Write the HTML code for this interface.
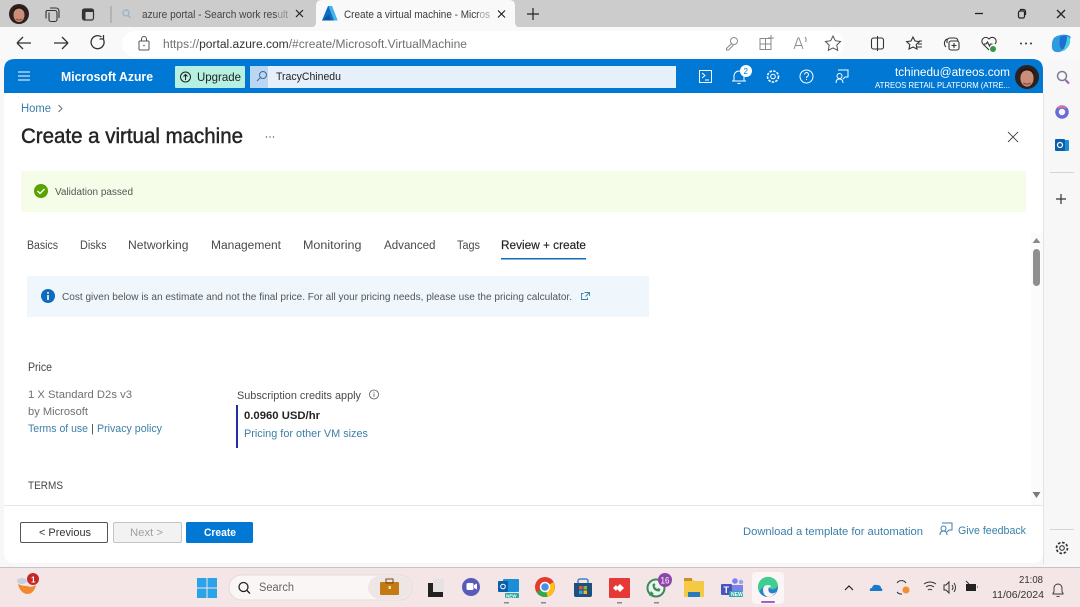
<!DOCTYPE html>
<html><head><meta charset="utf-8"><title>Create a virtual machine</title>
<style>
html,body{margin:0;padding:0;width:1080px;height:607px;overflow:hidden;background:#f7f7f7}
svg{display:block;fill:#323130}
text{font-family:"Liberation Sans",sans-serif}
text.l{fill:#3a7fa8}
</style></head><body>
<svg width="1080" height="607" viewBox="0 0 1080 607" xmlns="http://www.w3.org/2000/svg">
<defs>
<g id="av"><circle r="10" fill="#2c211e"/><ellipse cx="0" cy="1" rx="5.500" ry="7" fill="#c98d78"/><path d="M-6-2Q0-9 6-2L5-5Q0-9-5-5Z" fill="#1d1513"/><path d="M-3 5Q0 7 3 5" stroke="#8a3f3f" fill="none"/></g>
</defs>
<rect width="1080" height="607" fill="#f7f7f7"/>
<!-- tab strip -->
<rect width="1080" height="27" fill="#cccccc"/>
<use href="#av" x="19" y="14"/>
<path d="M47 10.500h8a2 2 0 0 1 2 2v7a2 2 0 0 1-2 2h-4a2 2 0 0 1-2-2v-7M47 10.500a2 2 0 0 0-1 2v6M50 8h6a3 3 0 0 1 3 3v7" style="fill:none;stroke:#333;stroke-width:1.100"/>
<rect x="82.500" y="9" width="11" height="11" rx="2" style="fill:none;stroke:#333;stroke-width:1.200"/><rect x="82.500" y="9" width="11" height="3" fill="#333"/><rect x="82.500" y="9" width="3" height="11" fill="#333"/>
<rect x="110.500" y="6" width="1" height="17" fill="#9a9a9a"/>
<circle cx="126" cy="13" r="3" style="fill:none;stroke:#8fb3cf;stroke-width:1.200"/><path d="M128 15.500l2.500 2.500" stroke="#8fb3cf" stroke-width="1.200"/>
<text x="142" y="18" font-size="11" textLength="146" lengthAdjust="spacingAndGlyphs" fill="#444">azure portal - Search work result</text>
<rect x="278" y="5" width="12" height="16" fill="#cccccc" opacity=".55"/>
<path d="M296 10l7 7M303 10l-7 7" stroke="#222" stroke-width="1.200"/>
<path d="M312 27q4 0 4-5V6q0-6 6-6h187q6 0 6 6v16q0 5 4 5Z" fill="#f9f9f9"/>
<path d="M322 20.500L328 6h4l5.500 14.500z" fill="#0a6fc2"/><path d="M328.500 6h3.500l5.500 14.500h-3.500z" fill="#45b4ea"/><path d="M322 20.500l6.500-6 3 6z" fill="#0b56a0"/>
<text x="344" y="18" font-size="11" textLength="146" lengthAdjust="spacingAndGlyphs" fill="#3a3a3a">Create a virtual machine - Micros</text>
<rect x="480" y="5" width="10" height="16" fill="#f9f9f9" opacity=".55"/>
<path d="M498 10.500l7 7M505 10.500l-7 7" stroke="#222" stroke-width="1.200"/>
<path d="M533 8v12M527 14h12" stroke="#222" stroke-width="1.200"/>
<path d="M975 13.500h8" stroke="#222" stroke-width="1.300"/>
<rect x="1018.500" y="11" width="6" height="7" rx="1.500" style="fill:none;stroke:#222;stroke-width:1.200"/><path d="M1020.500 11V9.500h3a2 2 0 0 1 2 2V15" style="fill:none;stroke:#222;stroke-width:1.200"/>
<path d="M1057 10l8 8M1065 10l-8 8" stroke="#222" stroke-width="1.300"/>
<!-- toolbar -->
<rect y="27" width="1080" height="32" fill="#f9f9f9"/>
<rect x="122" y="31" width="722" height="26" rx="13" fill="#ffffff"/>
<path d="M31 43H17M17 43l6-6M17 43l6 6" style="fill:none;stroke:#333;stroke-width:1.300"/>
<path d="M54 43h14M68 43l-6-6M68 43l-6 6" style="fill:none;stroke:#333;stroke-width:1.300"/>
<path d="M103.500 39.500a6.500 6.500 0 1 1-2-2.500M103.500 35v4h-4" style="fill:none;stroke:#333;stroke-width:1.300"/>
<rect x="139" y="41" width="10" height="9" rx="1" style="fill:none;stroke:#555;stroke-width:1"/><path d="M141.500 41v-2a2.500 2.500 0 0 1 5 0v2" style="fill:none;stroke:#555;stroke-width:1"/><circle cx="144" cy="45.500" r=".8" fill="#555"/>
<text x="163" y="48" font-size="11.500" textLength="304" lengthAdjust="spacingAndGlyphs" fill="#707070">https://<tspan fill="#333">portal.azure.com</tspan>/#create/Microsoft.VirtualMachine</text>
<g style="fill:none;stroke:#8a8a8a;stroke-width:1">
<circle cx="734" cy="41" r="3.500"/><path d="M731.500 43.500l-5 5v1.500h2l5-5"/>
<rect x="760" y="38.500" width="11" height="11"/><path d="M765.500 38.500v11M760 44h11M771 35v6M768 38h6"/>
<path d="M794 49l4-11h1l4 11M795.500 45.500h6.500M805 37q2 2 .5 5"/>
<path d="M833 36l2.300 4.700 5.200.8-3.700 3.600.9 5.200-4.700-2.400-4.700 2.400.9-5.200-3.700-3.600 5.200-.8z" stroke="#555"/>
</g>
<g style="fill:none;stroke:#333;stroke-width:1.100">
<rect x="871.500" y="38" width="12" height="11" rx="2"/><path d="M877.500 36v15"/>
<path d="M913 37l2 4 4.400.6-3.200 3 .8 4.400-4-2-4 2 .8-4.400-3.200-3 4.400-.6zM919 41h3M918 44h4M917 47h5"/>
<path d="M947 43v-2a3 3 0 0 1 3-3h5a3 3 0 0 1 3 3M946 47a5 5 0 0 1 1-8"/><rect x="949" y="41" width="10" height="9" rx="2"/><path d="M954 43v5M951.500 45.500h5"/>
<path d="M989 50l-6-6a3.800 3.800 0 0 1 5.500-5.500l.5.500.5-.5a3.800 3.800 0 0 1 5.500 5.500M984 44h2l1.500-2 2 4 1-2h2"/>
</g>
<circle cx="993" cy="49" r="3" fill="#2f9a45"/>
<circle cx="1021" cy="43.500" r="1" fill="#333"/><circle cx="1026" cy="43.500" r="1" fill="#333"/><circle cx="1031" cy="43.500" r="1" fill="#333"/>
<path d="M1052 44q0-6 5-8t10-1q5 1 3 4l-6 10q-3 4-8 3t-4-8z" fill="#2e9be0"/><path d="M1060 37q6-3 10 0-1 6-5 11-3 3-5-1-1-5 0-10z" fill="#1f6fd0"/><path d="M1067 36q3 1 3 3 1 5-3 9-2 3-5 3 5-6 5-15z" fill="#40d0e0"/>
<!-- page -->
<rect x="4" y="59" width="1039" height="504" fill="#ffffff"/>
<path d="M4 59h1039v34H4z" fill="#f9f9f9"/>
<path d="M4 70q0-11 11-11h1017q11 0 11 11v23H4z" fill="#0078d4"/>
<path d="M18 72h12M18 76h12M18 80h12" stroke="#fff" stroke-width="1"/>
<text x="61" y="81" font-size="13" font-weight="700" textLength="92" lengthAdjust="spacingAndGlyphs" fill="#fff">Microsoft Azure</text>
<rect x="175" y="66" width="70" height="22" rx="1" fill="#b5f0e0"/>
<circle cx="185.500" cy="77" r="5" style="fill:none;stroke:#222;stroke-width:1"/><path d="M185.500 80v-5.500M183.500 76.500l2-2 2 2" style="fill:none;stroke:#222;stroke-width:1"/>
<text x="197" y="81" font-size="12" textLength="44" lengthAdjust="spacingAndGlyphs" fill="#222">Upgrade</text>
<rect x="250" y="66" width="426" height="22" fill="#e6f0fb"/><rect x="250" y="66" width="18" height="22" fill="#b9d6f5"/>
<circle cx="263" cy="75" r="3.500" style="fill:none;stroke:#4a6a8a;stroke-width:1"/><path d="M260.500 77.500l-3.500 3.500" stroke="#4a6a8a" stroke-width="1"/>
<text x="276" y="80" font-size="11" textLength="65" lengthAdjust="spacingAndGlyphs" fill="#222">TracyChinedu</text>
<g style="fill:none;stroke:#fff;stroke-width:1">
<rect x="699.500" y="70.500" width="12" height="12"/><path d="M702 73l3 2.500-3 2.500M705 80h4"/>
<path d="M734 81v-5a5 5 0 0 1 10 0v5zM732 81h14M737.500 83a2 2 0 0 0 3 0"/>
<circle cx="773" cy="76.500" r="2.300"/><circle cx="773" cy="76.500" r="5.500" stroke-dasharray="2.500 1.200" stroke-width="1.600"/>
<circle cx="806.500" cy="76.500" r="6.500"/><path d="M804.500 74.500a2 2 0 1 1 3 1.800q-1 .6-1 1.700"/><path d="M806.500 79v1"/>
<path d="M838 70h10v7h-3l-2 2M836 83q0-4 3.500-4t3.500 4"/><circle cx="839.500" cy="76" r="2.500"/>
</g>
<circle cx="746" cy="71" r="6" fill="#fff"/><text x="743.500" y="74" font-size="8" fill="#0078d4">2</text>
<text x="895" y="76" font-size="11.500" textLength="115" lengthAdjust="spacingAndGlyphs" fill="#fff">tchinedu@atreos.com</text>
<text x="875" y="88" font-size="8.500" textLength="135" lengthAdjust="spacingAndGlyphs" fill="#fff">ATREOS RETAIL PLATFORM (ATRE...</text>
<use href="#av" transform="translate(1027 77) scale(1.200)"/>
<!-- sidebar -->
<rect x="1043" y="93" width="1" height="472" fill="#e3e3e3"/>
<circle cx="1062" cy="76" r="4.500" style="fill:none;stroke:#7a7a9a;stroke-width:1.500"/><path d="M1065.500 80l3.500 3.500" stroke="#9a60b0" stroke-width="2"/>
<circle cx="1062" cy="112" r="5" style="fill:none;stroke:#6a6ad8;stroke-width:3.500"/><path d="M1058 108a6 6 0 0 1 8 0" stroke="#e070a0" stroke-width="2" fill="none"/>
<rect x="1058" y="140" width="11" height="11" rx="1" fill="#1a8fd8"/><rect x="1055" y="139" width="10" height="12" rx="1" fill="#0a5fa8"/><circle cx="1060" cy="145" r="2.500" style="fill:none;stroke:#fff;stroke-width:1.200"/>
<rect x="1050" y="172" width="24" height="1" fill="#d4d4d4"/>
<path d="M1061 194v10M1056 199h10" stroke="#333" stroke-width="1.200"/>
<rect x="1050" y="529" width="24" height="1" fill="#d4d4d4"/>
<circle cx="1062" cy="548" r="2.300" style="fill:none;stroke:#333;stroke-width:1.100"/><circle cx="1062" cy="548" r="5.500" style="fill:none;stroke:#333;stroke-width:1.700" stroke-dasharray="2.600 1.700"/>
<!-- content -->
<text x="21" y="112" font-size="11.500" textLength="30" lengthAdjust="spacingAndGlyphs" class="l">Home</text>
<path d="M58.500 105l3.500 3.500-3.500 3.500" style="fill:none;stroke:#666;stroke-width:.9"/>
<text x="21" y="143" font-size="21" textLength="222" lengthAdjust="spacingAndGlyphs" fill="#252423" stroke="#252423" stroke-width=".45">Create a virtual machine</text>
<circle cx="266.500" cy="137" r=".7" fill="#555"/><circle cx="270" cy="137" r=".7" fill="#555"/><circle cx="273.500" cy="137" r=".7" fill="#555"/>
<path d="M1008 132l10 10M1018 132l-10 10" stroke="#444" stroke-width=".9"/>
<rect x="21" y="171" width="1005" height="41" fill="#f5fde9"/>
<circle cx="41" cy="191" r="7" fill="#57a300"/><path d="M37.500 191l2.500 2.500 4.500-4.500" style="fill:none;stroke:#fff;stroke-width:1.400"/>
<text x="55" y="195" font-size="10" textLength="78" lengthAdjust="spacingAndGlyphs" fill="#555">Validation passed</text>
<g font-size="11.500" fill="#4a4a4a">
<text x="27" y="249" textLength="31" lengthAdjust="spacingAndGlyphs">Basics</text>
<text x="80" y="249" textLength="26.500" lengthAdjust="spacingAndGlyphs">Disks</text>
<text x="128" y="249" textLength="60.500" lengthAdjust="spacingAndGlyphs">Networking</text>
<text x="211" y="249" textLength="70" lengthAdjust="spacingAndGlyphs">Management</text>
<text x="303" y="249" textLength="58.500" lengthAdjust="spacingAndGlyphs">Monitoring</text>
<text x="384" y="249" textLength="51.500" lengthAdjust="spacingAndGlyphs">Advanced</text>
<text x="457" y="249" textLength="23" lengthAdjust="spacingAndGlyphs">Tags</text>
<text x="501" y="249" textLength="85" lengthAdjust="spacingAndGlyphs" fill="#222" stroke="#222" stroke-width=".15">Review + create</text>
</g>
<rect x="501" y="258" width="85" height="1.500" fill="#0f6cbd"/>
<rect x="27" y="276" width="622" height="41" fill="#eff6fc"/>
<circle cx="48" cy="296" r="7" fill="#0f6cbd"/><rect x="47.200" y="292" width="1.600" height="1.700" fill="#fff"/><rect x="47.200" y="295" width="1.600" height="5" fill="#fff"/>
<text x="62" y="300" font-size="10" textLength="510" lengthAdjust="spacingAndGlyphs" fill="#555">Cost given below is an estimate and not the final price. For all your pricing needs, please use the pricing calculator.</text>
<path d="M583.500 293.500h-2v6h6v-2M584.500 292.500h5v3.500M589.500 292.500l-4 4" style="fill:none;stroke:#3a7fa8;stroke-width:.9"/>
<text x="28" y="371" font-size="11.500" textLength="24" lengthAdjust="spacingAndGlyphs" fill="#444">Price</text>
<text x="28" y="398" font-size="11" textLength="104" lengthAdjust="spacingAndGlyphs" fill="#707070">1 X Standard D2s v3</text>
<text x="28" y="415" font-size="11" textLength="60" lengthAdjust="spacingAndGlyphs" fill="#707070">by Microsoft</text>
<text x="28" y="432" font-size="11" textLength="60" lengthAdjust="spacingAndGlyphs" class="l">Terms of use</text>
<text x="91" y="432" font-size="11" fill="#444">|</text>
<text x="97" y="432" font-size="11" textLength="65" lengthAdjust="spacingAndGlyphs" class="l">Privacy policy</text>
<text x="237" y="399" font-size="11" textLength="124" lengthAdjust="spacingAndGlyphs" fill="#4a4a4a">Subscription credits apply</text>
<circle cx="374" cy="394.500" r="4.500" style="fill:none;stroke:#555;stroke-width:.8"/><path d="M374 393.500v3.500M374 391.800v1" stroke="#555" stroke-width=".8"/>
<rect x="236" y="405" width="2" height="43" fill="#1f2f9f"/>
<text x="244" y="419" font-size="11" font-weight="700" textLength="76" lengthAdjust="spacingAndGlyphs" fill="#252423">0.0960 USD/hr</text>
<text x="244" y="437" font-size="11" textLength="124" lengthAdjust="spacingAndGlyphs" class="l">Pricing for other VM sizes</text>
<text x="28" y="489" font-size="11" textLength="35" lengthAdjust="spacingAndGlyphs" fill="#444">TERMS</text>
<!-- scrollbar -->
<rect x="1031" y="233" width="12" height="272" fill="#fbfbfb"/>
<path d="M1032.500 243l4-5 4 5z" fill="#8a8a8a"/><rect x="1033" y="249" width="7" height="37" rx="3.500" fill="#8f8f8f"/><path d="M1032.500 492l4 6 4-6z" fill="#7a7a7a"/>
<!-- footer -->
<rect x="4" y="505" width="1039" height="1" fill="#e6e6e6"/>
<rect x="20.500" y="522.500" width="87" height="20" rx="1.500" fill="#fff" stroke="#555" stroke-width="1"/>
<text x="39" y="536" font-size="11" textLength="52" lengthAdjust="spacingAndGlyphs" fill="#333">&lt; Previous</text>
<rect x="113.500" y="522.500" width="68" height="20" rx="1.500" fill="#f2f2f2" stroke="#c4c4c4" stroke-width="1"/>
<text x="130" y="536" font-size="11" textLength="33" lengthAdjust="spacingAndGlyphs" fill="#a0a0a0">Next &gt;</text>
<rect x="186" y="522" width="67" height="21" rx="1.500" fill="#0078d4"/>
<text x="204" y="536" font-size="11" font-weight="700" textLength="32" lengthAdjust="spacingAndGlyphs" fill="#fff">Create</text>
<text x="743" y="535" font-size="11" textLength="180" lengthAdjust="spacingAndGlyphs" class="l">Download a template for automation</text>
<path d="M942 523h10v7h-3l-2 2M940 535q0-4 3.500-4t3.500 4" style="fill:none;stroke:#3a7fa8;stroke-width:1"/><circle cx="943.500" cy="528.500" r="2.500" style="fill:none;stroke:#3a7fa8;stroke-width:1"/>
<text x="958" y="534" font-size="11" textLength="68" lengthAdjust="spacingAndGlyphs" class="l">Give feedback</text>
<!-- bottom corners -->
<path d="M4 553v10h10q-10 0-10-10z" fill="#f7f7f7"/><path d="M1043 553v10h-10q10 0 10-10z" fill="#f7f7f7"/>
<!-- taskbar -->
<rect y="567" width="1080" height="40" fill="#f4e5e6"/>
<rect y="567" width="1080" height="1" fill="#c9c2c3"/>
<path d="M18 584q2 9 9 10 7 0 9-9-5 3-9 1-5 0-9-2z" fill="#f08a2c"/><ellipse cx="22" cy="581" rx="5" ry="3" fill="#c5d0e0"/>
<circle cx="33" cy="579" r="6" fill="#c62828"/><text x="31" y="582.500" font-size="8" font-weight="700" fill="#fff">1</text>
<g fill="#2aa3e8"><rect x="197" y="578" width="9.500" height="9.500"/><rect x="207.500" y="578" width="9.500" height="9.500"/><rect x="197" y="588.500" width="9.500" height="9.500"/><rect x="207.500" y="588.500" width="9.500" height="9.500"/></g>
<rect x="229" y="575" width="183" height="25" rx="12.500" fill="#fbf6f6" stroke="#e4dada"/>
<circle cx="243.500" cy="587" r="4.500" style="fill:none;stroke:#222;stroke-width:1.300"/><path d="M247 590.500l3 3" stroke="#222" stroke-width="1.300"/>
<text x="259" y="591" font-size="11.500" textLength="35" lengthAdjust="spacingAndGlyphs" fill="#666">Search</text>
<rect x="368" y="576" width="43" height="23" rx="11.500" fill="#eee6e5"/>
<rect x="380" y="582" width="19" height="13" rx="1" fill="#c47a14"/><rect x="386" y="579" width="7" height="4" style="fill:none;stroke:#7a4a10;stroke-width:1"/><rect x="388.500" y="586" width="2.500" height="3" fill="#f7e080"/>
<rect x="428" y="583" width="15" height="14" fill="#222"/><rect x="433" y="579" width="11" height="13" fill="#e6e2e2"/>
<circle cx="471" cy="587" r="9" fill="#5a5ab8"/><rect x="466.500" y="583" width="7" height="7" rx="1.500" fill="#fff"/><path d="M474 585l3-1.500v6l-3-1.500z" fill="#fff"/>
<rect x="503" y="579" width="16" height="13" rx="1" fill="#1a8fd8"/><rect x="498" y="581" width="10" height="11" rx="1" fill="#0a5fa8"/><circle cx="503" cy="586.500" r="2.300" style="fill:none;stroke:#fff;stroke-width:1"/><rect x="505" y="593" width="14" height="5" rx="1" fill="#2aa8a8"/><text x="506" y="597.500" font-size="4.500" font-weight="700" fill="#fff">NEW</text>
<circle cx="545" cy="587" r="10" fill="#e33b2e"/><path d="M545 587L536.500 592a10 10 0 0 0 11 4.700z" fill="#2da94f"/><path d="M545 587l2.500 9.700a10 10 0 0 0 6-14.700z" fill="#fbc116"/><circle cx="545" cy="587" r="4.500" fill="#4a90e2" stroke="#fff" stroke-width="1.500"/>
<path d="M574 583h18v12a2 2 0 0 1-2 2h-14a2 2 0 0 1-2-2z" fill="#1f4f7c"/><path d="M578 583v-2a2 2 0 0 1 2-2h6a2 2 0 0 1 2 2v2" style="fill:none;stroke:#3f86c8;stroke-width:1.500"/><rect x="579" y="586" width="3.500" height="3.500" fill="#e8532a"/><rect x="583.500" y="586" width="3.500" height="3.500" fill="#7fba30"/><rect x="579" y="590.500" width="3.500" height="3.500" fill="#2aa4ee"/><rect x="583.500" y="590.500" width="3.500" height="3.500" fill="#fbb816"/>
<rect x="609" y="578" width="21" height="20" rx="1" fill="#e53935"/><path d="M616 588l4-4 4 4-4 4z" fill="#fff"/><path d="M613 588l3-3 2 3-2 3z" fill="#fff"/>
<circle cx="656" cy="588" r="8.500" fill="#eef5ee" stroke="#3a8a5a" stroke-width="2"/><path d="M649 596l2-5 3 3z" fill="#3a8a5a"/><path d="M652.500 584.500q0 7 7 7l1-2.200-2-1.300-1 1q-2-.7-3-3l1-1-1.300-2z" fill="#3a8a5a"/>
<circle cx="665" cy="580" r="7" fill="#8e44ad"/><text x="660.500" y="583.500" font-size="9" textLength="9" lengthAdjust="spacingAndGlyphs" fill="#fff">16</text>
<path d="M684 579h8l2 2h10v16h-20z" fill="#f6c945"/><rect x="684" y="578" width="8" height="3" fill="#c8922a"/><path d="M688 592h12v5h-12z" fill="#2a7ab8"/>
<rect x="721" y="584" width="11" height="11" rx="1" fill="#4b53bc"/><text x="723.500" y="593" font-size="9" font-weight="700" fill="#fff">T</text><circle cx="735" cy="581" r="2.800" fill="#7b83eb"/><circle cx="741" cy="582" r="2.200" fill="#9aa0ee"/><rect x="732" y="585" width="11" height="6" fill="#7b83eb"/><rect x="729" y="591" width="14" height="6" rx="1" fill="#2aa8a8"/><text x="731" y="596" font-size="5" font-weight="700" fill="#fff">NEW</text>
<rect x="752" y="572" width="32" height="32" rx="4" fill="#fbf5f6"/>
<circle cx="768" cy="587" r="10" fill="#2b7fd0"/><path d="M759 583a10 10 0 0 1 18-1q2 6-3 7-4 1-5-2-5-3-10 5-2-5 0-9z" fill="#3ecf8e"/><path d="M763 590q0-5 5-5 3 0 3 2-4 0-2 5 3 3 7 0-3 5-8 5-5-2-5-7z" fill="#f7f4f4"/>
<rect x="761" y="601" width="14" height="2" rx="1" fill="#a860c8"/>
<g fill="#888"><rect x="504" y="602" width="5" height="1.500"/><rect x="541" y="602" width="5" height="1.500"/><rect x="617" y="602" width="5" height="1.500"/><rect x="654" y="602" width="5" height="1.500"/></g>
<path d="M845 590l4-4 4 4" style="fill:none;stroke:#222;stroke-width:1.200"/>
<path d="M870 591q-1-3 2-3 1-4 5-3 4 0 4 3 2 1 1 3z" fill="#1a78c8"/>
<path d="M897 583a5.500 5.500 0 0 1 9 0M897 592a5.500 5.500 0 0 0 5 2" style="fill:none;stroke:#333;stroke-width:1"/><circle cx="906" cy="590" r="3.500" fill="#f09030"/>
<g style="fill:none;stroke:#333;stroke-width:1"><path d="M924 584q6-4 12 0M926 587q4-3 8 0M928 590q2-1.500 4 0"/><path d="M944 585h2l3-3v11l-3-3h-2zM952 585q2 2.500 0 5M954 583q3 4.500 0 9"/><path d="M966 581l3 3M977 587h1"/></g><rect x="966" y="584" width="10" height="7" fill="#222"/>
<text x="1019" y="583" font-size="10.500" textLength="24" lengthAdjust="spacingAndGlyphs" fill="#333">21:08</text>
<text x="992" y="598" font-size="10.500" textLength="52" lengthAdjust="spacingAndGlyphs" fill="#333">11/06/2024</text>
<path d="M1053 594v-1l1-1v-4a4 4 0 0 1 8 0v4l1 1v1zM1056.500 596a2 2 0 0 0 3 0" style="fill:none;stroke:#333;stroke-width:.9"/>
</svg>
</body></html>
